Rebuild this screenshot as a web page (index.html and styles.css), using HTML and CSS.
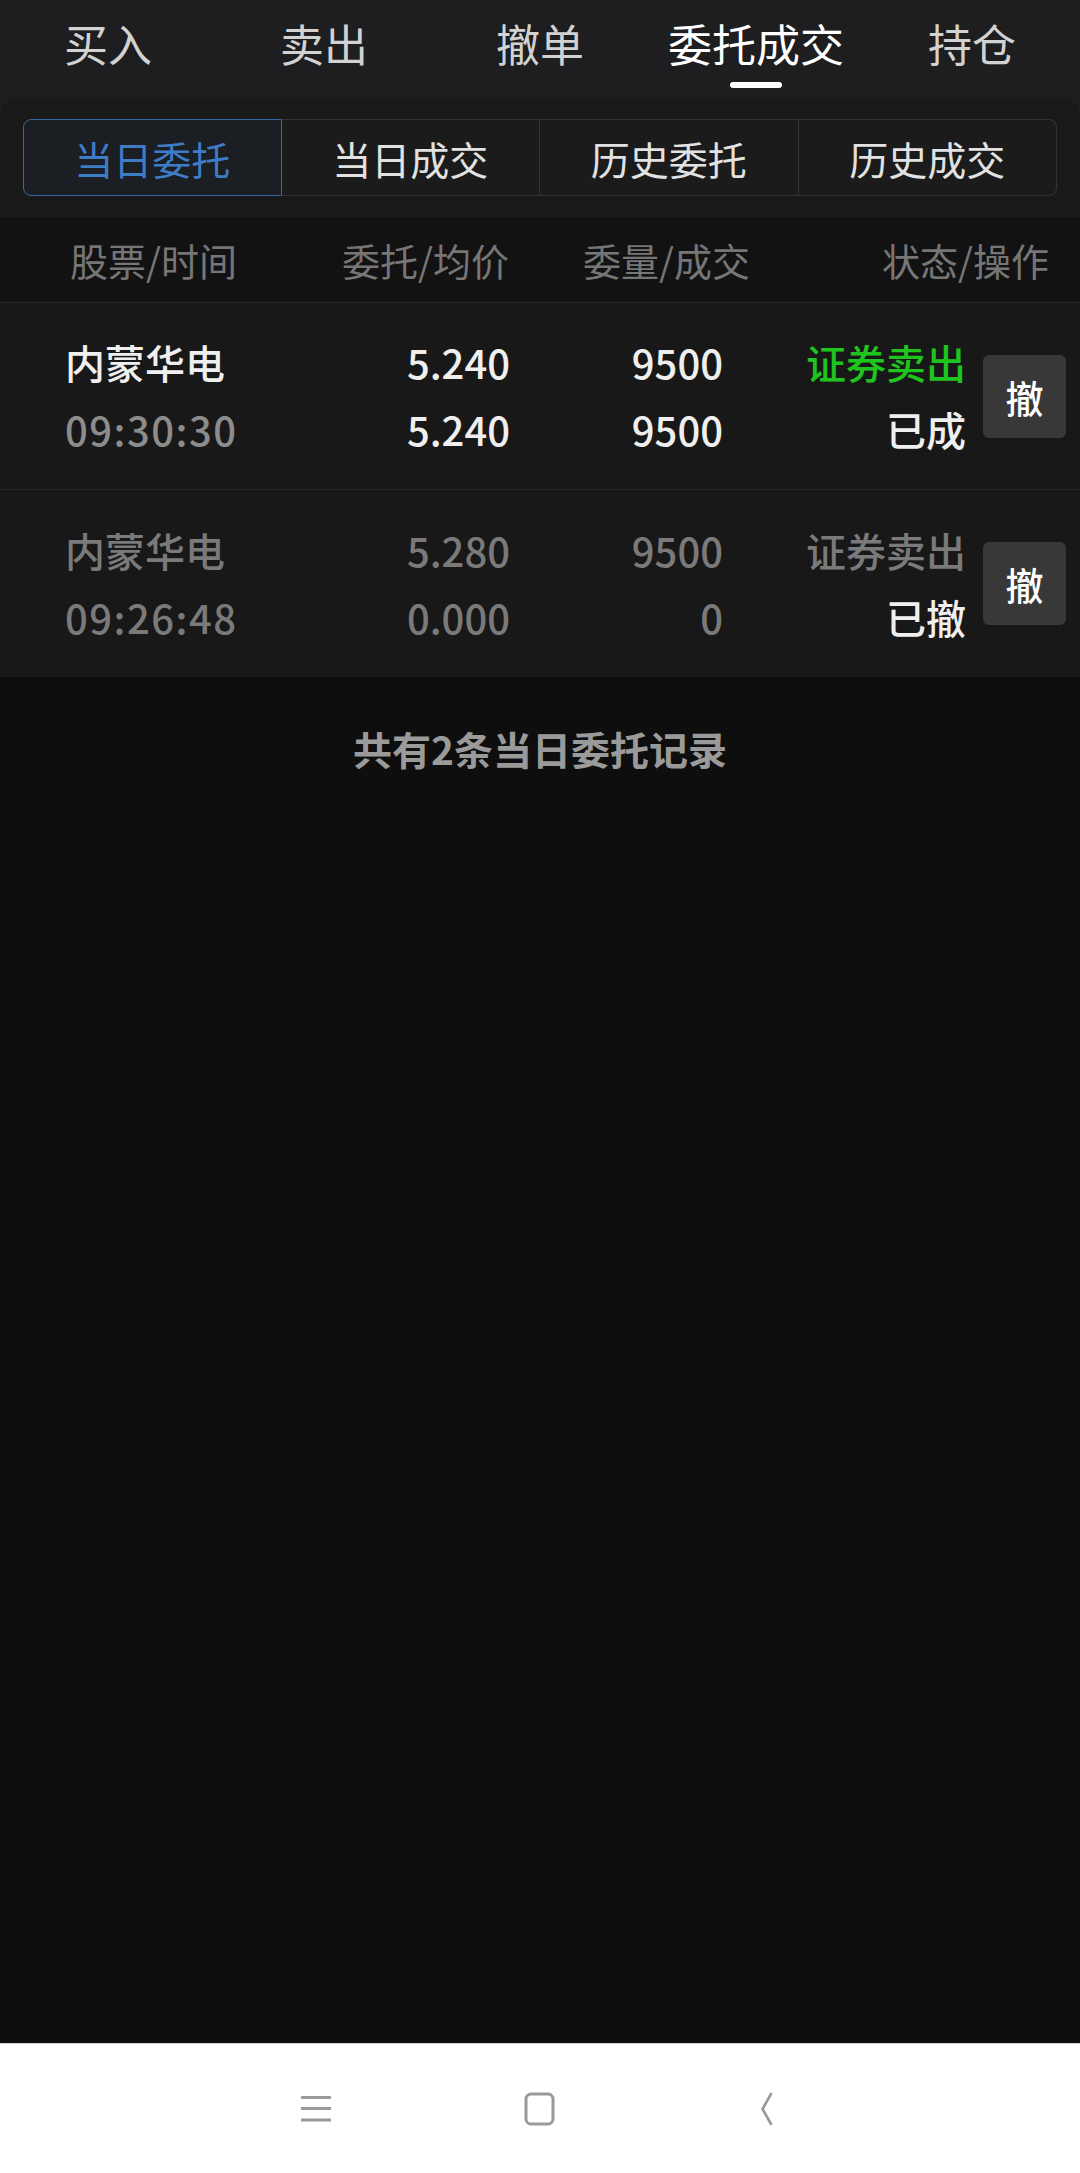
FILE: index.html
```html
<!DOCTYPE html>
<html lang="zh-CN">
<head>
    <meta charset="UTF-8">
    <meta name="viewport" content="width=device-width, initial-scale=1.0">
    <title>委托成交</title>
    <link rel="stylesheet" href="styles.css">
</head>
<body>

    <!-- Trade tabs -->
    <nav class="top-tabs">
        <div class="tab">买入</div>
        <div class="tab">卖出</div>
        <div class="tab">撤单</div>
        <div class="tab active">委托成交</div>
        <div class="tab">持仓</div>
    </nav>

    <div class="panel-wrap">
        <div class="panel">
            <div class="segmented">
                <div class="seg active">当日委托</div>
                <div class="seg">当日成交</div>
                <div class="seg">历史委托</div>
                <div class="seg">历史成交</div>
            </div>
        </div>
    </div>

    <main class="content">
        <div class="list-header">
            <span>股票/时间</span>
            <span class="r">委托/均价</span>
            <span class="r">委量/成交</span>
            <span class="r">状态/操作</span>
        </div>

        <div class="order">
            <div class="cell">
                <span class="strong">内蒙华电</span>
                <span class="dim time">09:30:30</span>
            </div>
            <div class="cell r">
                <span class="strong">5.240</span>
                <span class="strong">5.240</span>
            </div>
            <div class="cell r">
                <span class="strong">9500</span>
                <span class="strong">9500</span>
            </div>
            <div class="cell r">
                <span class="sell">证券卖出</span>
                <span class="strong">已成</span>
            </div>
            <button class="cancel">撤</button>
        </div>

        <div class="order done">
            <div class="cell">
                <span>内蒙华电</span>
                <span class="time">09:26:48</span>
            </div>
            <div class="cell r">
                <span>5.280</span>
                <span>0.000</span>
            </div>
            <div class="cell r">
                <span>9500</span>
                <span>0</span>
            </div>
            <div class="cell r">
                <span>证券卖出</span>
                <span class="strong">已撤</span>
            </div>
            <button class="cancel">撤</button>
        </div>

        <p class="summary">共有2条当日委托记录</p>
    </main>

    <!-- System navigation bar -->
    <footer class="sys-nav">
        <div class="nav-btn">
            <svg width="30" height="30" viewBox="0 0 30 30">
                <path d="M1 3.5h28M1 14.5h28M1 26h28" stroke="#999" stroke-width="3" stroke-linecap="round"/>
            </svg>
        </div>
        <div class="nav-btn">
            <svg width="32" height="34" viewBox="0 0 32 34">
                <rect x="2" y="2" width="27" height="30" rx="5" fill="none" stroke="#999" stroke-width="3"/>
            </svg>
        </div>
        <div class="nav-btn">
            <svg width="20" height="34" viewBox="0 0 20 34">
                <path d="M17 2L8.5 17L17 32" fill="none" stroke="#999" stroke-width="2.6" stroke-linecap="round" stroke-linejoin="round"/>
            </svg>
        </div>
    </footer>

</body>
</html>
```

FILE: styles.css
```css
body {
    margin: 0;
    height: 2173px;
    display: flex;
    flex-direction: column;
    background-color: #0e0e0e;
    font-family: "Noto Sans CJK SC", "Noto Sans", sans-serif;
    color: #e6e6e6;
}

/* Top trade tabs */
.top-tabs {
    height: 97px;
    display: grid;
    grid-template-columns: repeat(5, 1fr);
    background-color: #1e1e20;
}

.tab {
    display: flex;
    flex-direction: column;
    align-items: center;
    padding-top: 13px;
    font-size: 44px;
    line-height: 60px;
    color: #d2d2d2;
}

.tab.active {
    color: #ffffff;
}

.tab.active::after {
    content: "";
    width: 52px;
    height: 6px;
    margin-top: 9px;
    border-radius: 3px;
    background-color: #ffffff;
}

/* Segmented control */
.panel-wrap {
    background-color: #1e1e20;
}

.panel {
    background-color: #19191a;
    border-radius: 20px 20px 0 0;
    padding: 22px 23px 21px;
}

.segmented {
    display: grid;
    grid-template-columns: repeat(4, 1fr);
    height: 77px;
}

.seg {
    display: flex;
    justify-content: center;
    align-items: center;
    font-size: 39px;
    color: #e2e2e2;
    border: 1px solid #333335;
    border-left: none;
    background-color: #1b1b1c;
}

.seg:first-child {
    border-left: 1px solid #333335;
    border-radius: 8px 0 0 8px;
}

.seg:last-child {
    border-radius: 0 8px 8px 0;
}

.seg.active {
    color: #3f7cc6;
    border-color: #34679f;
    background-color: #1b1e23;
}

/* Order list */
.content {
    flex: 1;
}

.list-header {
    height: 85px;
    display: grid;
    grid-template-columns: 209px 230px 241px 299px;
    align-items: center;
    padding-left: 70px;
    font-size: 38px;
    color: #767676;
    background-color: #121212;
    border-bottom: 1px solid #262626;
}

.r {
    text-align: right;
}

.order {
    height: 186px;
    display: grid;
    grid-template-columns: 235px 210px 213px 243px 83px;
    align-items: center;
    padding-left: 65px;
    background-color: #181818;
    font-size: 40px;
    font-weight: 500;
    color: #7a7a7a;
}

.order + .order {
    height: 187px;
    border-top: 1px solid #262626;
}

.cell {
    display: flex;
    flex-direction: column;
    line-height: 67px;
}

.cell.r {
    align-items: flex-end;
}

.time {
    letter-spacing: 1.5px;
}

.strong {
    color: #efefef;
}

.dim {
    color: #8c8c8c;
}

.sell {
    color: #1fc41f;
}

.cancel {
    width: 83px;
    height: 83px;
    margin-left: 17px;
    padding: 0;
    border: none;
    border-radius: 6px;
    background-color: #383838;
    color: #ffffff;
    font-family: inherit;
    font-size: 38px;
    font-weight: 500;
}

.summary {
    margin: 46px 0 0;
    text-align: center;
    font-size: 39px;
    line-height: 50px;
    font-weight: 700;
    color: #9a9a9a;
}

/* System nav bar */
.sys-nav {
    height: 129px;
    display: flex;
    justify-content: center;
    align-items: center;
    background-color: #ffffff;
    border-top: 1px solid #cfcfcf;
}

.nav-btn {
    width: 224px;
    display: flex;
    justify-content: center;
}
```
